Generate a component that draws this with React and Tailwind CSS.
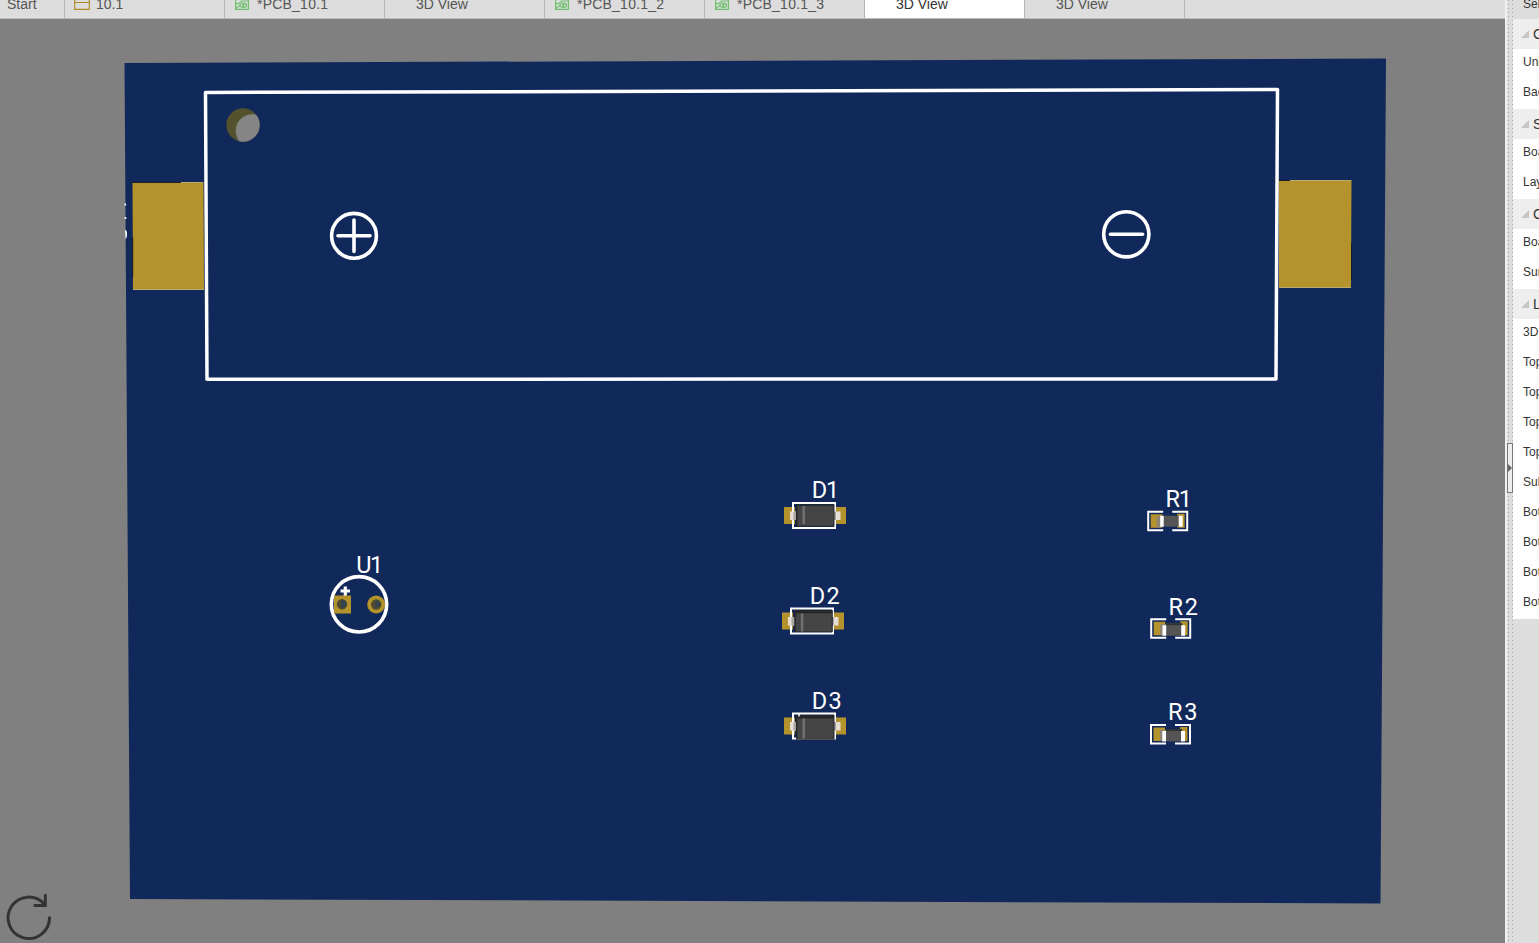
import React from "react";

function FolderIcon() {
  return (
    <svg className="block h-[14px] w-4" viewBox="0 0 16 14" fill="none" stroke="#b08a28" strokeWidth="1.2">
      <path d="M.7 2V13.4H15.3V2M.7 6.5H15.3" />
    </svg>
  );
}

function BoardIcon() {
  return (
    <svg className="block h-[14px] w-4" viewBox="0 0 16 14" fill="none" stroke="#6dc06c" strokeWidth="1.2">
      <path d="M1.6 1V13.4H14.4V1M1.6 7.7H4.5L7.6 5H14.4M2 12.2L6 9.6" />
      <path d="M5.5 9.5Q7 7 9.4 7.2Q12.6 7.4 12.6 9.4Q12.4 11.3 9.5 11.3Q7 11.2 5.5 9.5Z" />
      <circle cx="9.3" cy="9.2" r=".7" />
    </svg>
  );
}

const tabs = [
  { label: "10.1", icon: "folder" },
  { label: "*PCB_10.1", icon: "board" },
  { label: "3D View" },
  { label: "*PCB_10.1_2", icon: "board" },
  { label: "*PCB_10.1_3", icon: "board" },
  { label: "3D View", active: true },
  { label: "3D View" },
];

function Tab({ label, icon, active }) {
  return (
    <div
      className={`flex h-[18px] w-40 shrink-0 overflow-hidden border-r border-[#b5b5b5] ${
        active ? "bg-white text-[#333]" : "text-[#555]"
      }`}
    >
      <div className="ml-[9px] -mt-[4px] w-[23px] shrink-0">
        {icon === "folder" && <FolderIcon />}
        {icon === "board" && <BoardIcon />}
      </div>
      <span
        className={`-mt-1 leading-4 whitespace-nowrap ${
          icon === "board" ? "tracking-[0.22px]" : "-ml-px"
        }`}
      >
        {label}
      </span>
    </div>
  );
}

function Label({ x, y, w, children }) {
  return (
    <text
      x={x}
      y={y}
      textLength={w}
      lengthAdjust="spacing"
      fill="#fff"
      fontSize="23.5"
      className="font-[Roboto,sans-serif]"
    >
      {children}
    </text>
  );
}

function Diode({ x, y, shift = 0, open }) {
  return (
    <g transform={`translate(${x} ${y})`}>
      <path d="M0 5H11V22H0ZM50 5H62V22H50Z" fill="#b4932c" />
      <path d="M9 10V1H51V10M9 17V26H51V17" fill="none" stroke="#fff" strokeWidth="2" />
      <path d="M6 9.5H12V18H6ZM50.5 9.5H56.5V18H50.5Z" fill="#e6ddd5" />
      <path d="M9.5 9.5H13V18H9.5ZM49.5 9.5H52V18H49.5Z" fill="#aaa7a3" />
      <rect x={12 + shift} y="2.5" width="38.5" height={open ? 24.5 : 22} fill="#242628" />
      <rect x={13.5 + shift} y={open ? 6 : 3.8 + (shift ? 2 : 0)} width="36" height={open ? 21 : shift ? 18.2 : 20} fill="#454545" />
      <rect x={18.5 + shift} y={open ? 6 : shift ? 6 : 4} width="2.5" height={open ? 20 : 18} fill="#707070" />
      {open && <path d="M15 1V4" stroke="#fff" strokeWidth="1.5" />}
    </g>
  );
}

function Resistor({ x, y, tilt }) {
  return (
    <g transform={`translate(${x} ${y})`}>
      <path d="M3.5 3.5H15V17H3.5ZM30 3H37.5V17H30Z" fill="#b4932c" />
      <path d={tilt ? "M10 6H16V17H10Z" : "M9.5 5.5H15V17H9.5Z"} fill="#8d8477" />
      <path d="M16 1H1V19.5H16M25 1H40V19.5H25" fill="none" stroke="#fff" strokeWidth="2" />
      <rect x="16" y="5" width="16" height={tilt ? 12.5 : 11} fill="#555" />
      {tilt && <rect x="16" y="5" width="16" height="2" fill="#303438" />}
      <path d={tilt ? "M12.3 7H16V17.5H12.3ZM31 7H35V17.5H31Z" : "M13 5H16.5V16H13ZM31.5 5H35.5V16H31.5Z"} fill="#fff" />
    </g>
  );
}

function Board() {
  return (
    <svg className="block h-[924px] w-[1505px]" viewBox="0 19 1505 924">
      <defs>
        <clipPath id="hole">
          <circle cx="243" cy="125" r="16.7" />
        </clipPath>
      </defs>
      <path d="M124.5 63L1386 58.5L1380.5 903.5L130 899Z" fill="#11285a" />
      <path d="M125.3 203.5V205.5M125.5 217V219" stroke="#fff" strokeWidth="1.6" />
      <path d="M125 230Q127 230 127 234Q127 238 125.5 239Z" fill="#fff" />

      <path d="M132.5 182.6L203.5 182.3L204 290L133 290Z" fill="#b4932c" />
      <path d="M132.5 182.4H181M132.7 237V277" stroke="#191d22" />
      <path d="M1279 180L1351.5 180L1351 288L1279 288Z" fill="#b4932c" />
      <path d="M1279 180.5H1290M1351.5 243V280" stroke="#191d22" />
      <path d="M181 182.5H203M1290 180.5H1351M133 289.5H204M1279 287.5H1351" stroke="#b9aa70" />
      <path d="M205.5 92.5L1277.5 89.5L1276 379L207 379.2Z" fill="none" stroke="#fff" strokeWidth="3.5" strokeLinejoin="round" />

      <circle cx="243" cy="125" r="16.7" fill="#53512e" />
      <circle cx="252.5" cy="131" r="16.8" fill="#858585" clipPath="url(#hole)" />

      <g fill="none" stroke="#fff" strokeWidth="3.6" strokeLinecap="round">
        <circle cx="354" cy="235.8" r="22.4" />
        <path d="M338 235.8H370M354 220V251.5" />
        <circle cx="1126.3" cy="234.3" r="22.6" />
        <path d="M1110.5 234.3H1142.5" />
      </g>

      <circle cx="359" cy="604.3" r="27.7" fill="none" stroke="#fff" strokeWidth="3.6" />
      <path d="M340.5 591H350M345.3 586.5V596" stroke="#fff" strokeWidth="3.2" />
      <path d="M334 595.5H351V613.5H334Z" fill="#b4932c" />
      <circle cx="342" cy="604.2" r="5.2" fill="#514b2b" />
      <path d="M341 600Q346.5 600 346.5 604.5Q345.5 608 341 608Z" fill="#35444d" />
      <circle cx="376.2" cy="604.5" r="9" fill="#b4932c" />
      <circle cx="376.2" cy="604.5" r="5.2" fill="#514b2b" />
      <path d="M375 601Q380.5 600 380.8 604.5Q379 608 375 608Z" fill="#35444d" />
      <Label x={356.2} y={573} w={27}>U1</Label>

      <Label x={811.7} y={498} w={27.5}>D1</Label>
      <Label x={809.8} y={603.5} w={30}>D2</Label>
      <Label x={811.7} y={708.8} w={30}>D3</Label>
      <Diode x={784} y={502} />
      <Diode x={782} y={607.5} shift={0.3} />
      <Diode x={784} y={712.5} open />

      <Label x={1165.5} y={507} w={26.5}>R1</Label>
      <Label x={1168.5} y={614.5} w={29.5}>R2</Label>
      <Label x={1168} y={720} w={29.5}>R3</Label>
      <Resistor x={1147.2} y={510.7} />
      <Resistor x={1150.2} y={618.2} tilt />
      <Resistor x={1150} y={724} tilt />

      <path d="M49.5 917.8A20.7 20.7 0 1 1 44.5 904.3M45.3 895.3V905.6H34.8" fill="none" stroke="#333" strokeWidth="3" strokeLinecap="round" />
    </svg>
  );
}

const groups = [
  { title: "C", rows: ["Uni", "Bac"] },
  { title: "S", rows: ["Boa", "Lay"] },
  { title: "C", rows: ["Boa", "Sur"] },
  { title: "L", rows: ["3D", "Top", "Top", "Top", "Top", "Sub", "Bot", "Bot", "Bot", "Bot"] },
];

function Splitter() {
  return (
    <div className="relative flex w-2 shrink-0 border-l-2 border-[#f0f0f0] bg-[#dddddd]">
      <div className="ml-px w-px bg-[repeating-linear-gradient(to_bottom,#aaaaaa_0_1px,transparent_1px_4px)]" />
      <div className="ml-[3px] w-px bg-[repeating-linear-gradient(to_bottom,#aaaaaa_0_1px,transparent_1px_4px)]" />
      <div className="absolute top-[443px] left-0 flex h-[50px] w-[6px] items-center border border-[#777] bg-[#ededed]">
        <svg className="h-2 w-1" viewBox="0 0 4 8">
          <path d="M0 0L4 4L0 8Z" fill="#666" />
        </svg>
      </div>
    </div>
  );
}

function SidePanel() {
  return (
    <aside className="flex w-[26px] shrink-0 flex-col overflow-hidden bg-[#dddddd] text-xs text-[#333]">
      <div className="flex h-[19px] shrink-0 pl-[10px]">
        <div className="-mt-1 leading-4">Sel</div>
      </div>
      {groups.map((group, i) => (
        <section key={i}>
          <div className="flex h-[30px] items-center bg-[#eeeeee] pl-2 text-sm">
            <svg className="h-2 w-2 shrink-0" viewBox="0 0 8 8">
              <path d="M8 0V8H0Z" fill="#c6c6c6" />
            </svg>
            <span className="ml-1">{group.title}</span>
          </div>
          {group.rows.map((row, j) => (
            <div key={j} className="h-[30px] bg-white pl-[10px] leading-[26px] whitespace-nowrap">
              {row}
            </div>
          ))}
        </section>
      ))}
    </aside>
  );
}

export default function App() {
  return (
    <div className="flex h-[943px] w-[1539px] overflow-hidden bg-[#808080] font-['Liberation_Sans',Arial,sans-serif]">
      <main className="flex w-[1505px] shrink-0 flex-col">
        <nav className="flex h-[19px] shrink-0 overflow-hidden border-b border-[#bcbcbc] bg-[#dddddd] text-sm text-[#555]">
          <div className="h-[18px] w-[65px] shrink-0 border-r border-[#b5b5b5] pl-[7px]">
            <div className="-mt-1 leading-4">Start</div>
          </div>
          {tabs.map((tab, i) => (
            <Tab key={i} {...tab} />
          ))}
        </nav>
        <Board />
      </main>
      <Splitter />
      <SidePanel />
    </div>
  );
}
